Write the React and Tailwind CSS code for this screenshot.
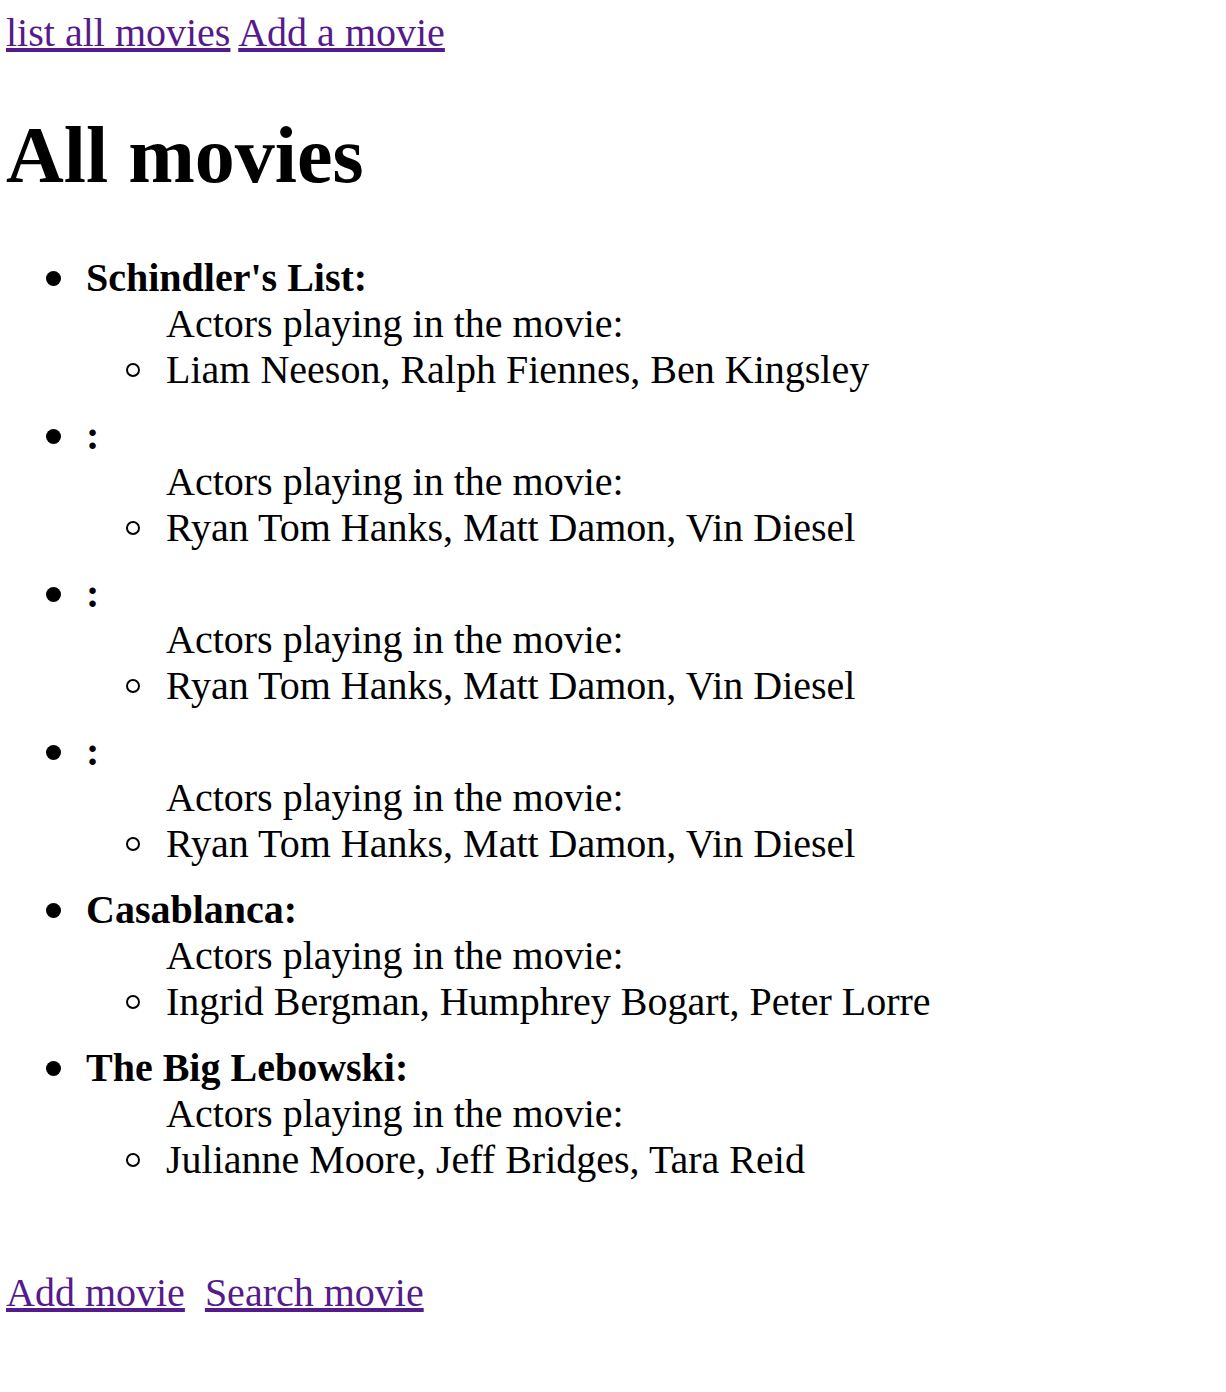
import React from "react";

const movies = [
  { title: "Schindler's List", actors: "Liam Neeson, Ralph Fiennes, Ben Kingsley" },
  { title: "", actors: "Ryan Tom Hanks, Matt Damon, Vin Diesel" },
  { title: "", actors: "Ryan Tom Hanks, Matt Damon, Vin Diesel" },
  { title: "", actors: "Ryan Tom Hanks, Matt Damon, Vin Diesel" },
  { title: "Casablanca", actors: "Ingrid Bergman, Humphrey Bogart, Peter Lorre" },
  { title: "The Big Lebowski", actors: "Julianne Moore, Jeff Bridges, Tara Reid" },
];

export default function App() {
  return (
    <div
      className="min-h-[1392px] bg-white pl-[6px] pt-[10px] text-[40px] leading-[46px] text-black"
      style={{ fontFamily: '"Liberation Serif", "Times New Roman", serif' }}
    >
      {/* top nav */}
      <div>
        <a href="#" className="text-[#551a8b] underline">list all movies</a>{" "}
        <a href="#" className="text-[#551a8b] underline">Add a movie</a>
      </div>

      <h1 className="mt-[53px] text-[80px] font-bold leading-[92px]">All movies</h1>

      <ul className="mt-[54px] list-none pl-[80px]">
        {movies.map((m, i) => (
          <li key={i}>
            <span className="ml-[-40px] mr-[25px] inline-block h-[15px] w-[15px] rounded-full bg-black align-[5px]" />
            <b>{m.title}:</b>
            <ul className="mb-[20px] list-none pl-[80px]">
              Actors playing in the movie:
              <li>
                <span className="ml-[-40px] mr-[26px] inline-block h-[14px] w-[14px] rounded-full border-2 border-black align-[6px]" />
                {m.actors}
              </li>
            </ul>
          </li>
        ))}
      </ul>

      {/* footer links */}
      <div className="mt-[87px]">
        <a href="#" className="text-[#551a8b] underline">Add movie</a>
        <span className="inline-block w-[20px]" />
        <a href="#" className="text-[#551a8b] underline">Search movie</a>
      </div>
    </div>
  );
}
